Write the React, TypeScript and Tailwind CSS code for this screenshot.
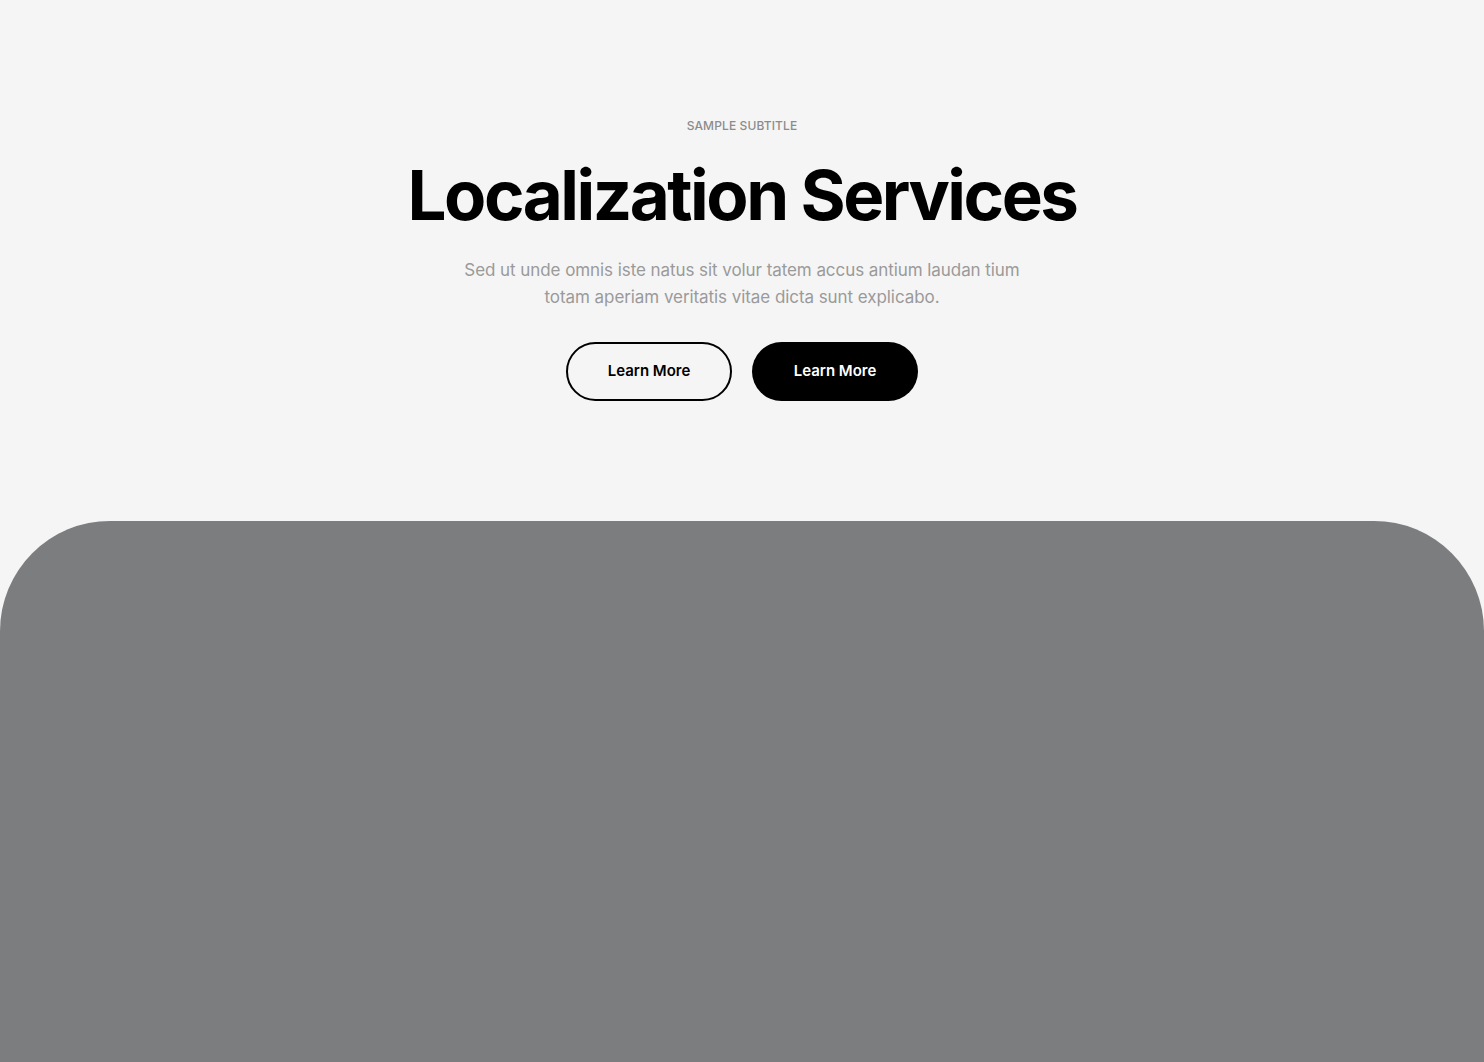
export default function App() {
  return (
    <div className="min-h-screen bg-[#f5f5f5] font-['Inter',sans-serif] overflow-hidden">
      <section className="flex flex-col items-center pt-[118px] text-center">
        <p className="text-[12px] leading-[16px] uppercase font-medium text-[#8c8c8c] tracking-[0.01em]">Sample Subtitle</p>
        <h1 className="mt-[25px] text-[69px] leading-[72px] font-bold text-black tracking-[-0.036em]">
          Localization Services
        </h1>
        <p className="mt-[26px] max-w-[590px] text-[17px] leading-[27px] text-[#9a9a9a] tracking-[-0.004em]">
          Sed ut unde omnis iste natus sit volur tatem accus antium laudan tium totam aperiam veritatis vitae dicta sunt explicabo.
        </p>
        <div className="mt-[31px] flex gap-[20px]">
          <a
            href="#"
            className="w-[166px] h-[59px] flex items-center justify-center rounded-full border-2 border-black text-[15px] font-semibold text-black"
          >
            Learn More
          </a>
          <a
            href="#"
            className="w-[166px] h-[59px] flex items-center justify-center rounded-full bg-black text-[15px] font-semibold text-white"
          >
            Learn More
          </a>
        </div>
      </section>
      <div className="mt-[120px] h-[560px] bg-[#7c7d7f] rounded-t-[110px]" />
    </div>
  )
}
